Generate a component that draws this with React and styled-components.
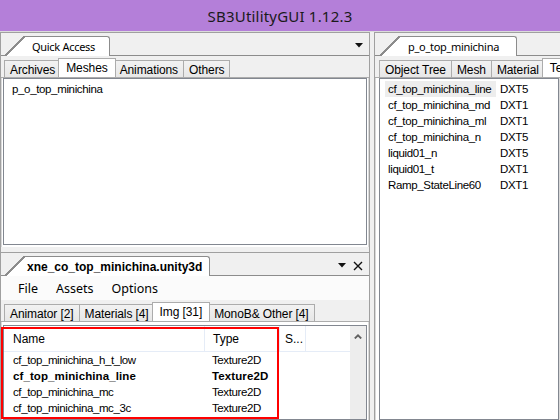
import React from "react";
import styled, { createGlobalStyle } from "styled-components";

const GlobalStyle = createGlobalStyle`
  html, body {
    margin: 0;
    padding: 0;
    background: #f0f0f0;
  }
  body {
    font-family: "Liberation Sans", Arial, sans-serif;
    font-size: 12px;
    color: #000;
    overflow: hidden;
  }
`

const Window = styled.div`
  position: relative;
  width: 560px;
  height: 420px;
  display: flex;
  flex-direction: column;
  overflow: hidden;
  background: #f0f0f0;
`
const TitleBar = styled.div`
  flex: none;
  height: 31px;
  display: flex;
  align-items: center;
  justify-content: center;
  background: #b47fd9;
  font-family: "Noto Sans", "Open Sans", sans-serif;
  font-size: 15px;
  color: #1a1a1a;
  letter-spacing: 0.2px;
`
const Body = styled.div`
  flex: 1;
  min-height: 0;
  display: flex;
  border-top: 1px solid #dcdcdc;
`
const LeftColumn = styled.div`
  width: 368px;
  flex: none;
  display: flex;
  flex-direction: column;
  border-left: 1px solid #a0a0a0;
  border-right: 1px solid #a0a0a0;
`
const Splitter = styled.div`
  width: 4px;
  flex: none;
`
const RightColumn = styled.div`
  flex: 1;
  min-width: 0;
  display: flex;
  flex-direction: column;
  border-left: 1px solid #a0a0a0;
`
const Pane = styled.div`
  display: flex;
  flex-direction: column;
  min-height: 0;
  ${p => p.$height ? `height: ${p.$height}px; flex: none;` : `flex: 1;`}
  border-top: 1px solid #a0a0a0;
`
const PaneGap = styled.div`
  height: 5px;
  flex: none;
`
const DocStrip = styled.div`
  flex: none;
  height: 22px;
  display: flex;
  align-items: flex-end;
  padding-left: ${p => p.$indent || 24}px;
  padding-right: 6px;
  border-bottom: 1px solid #8c8c8c;
`
const DocTab = styled.div`
  position: relative;
  height: 19px;
  margin-bottom: -1px;
  display: flex;
  align-items: center;
  padding: 0 ${p => p.$padRight}px 0 ${p => p.$padLeft}px;
  background: #fff;
  border: 1px solid #8c8c8c;
  border-left: none;
  border-bottom: none;
  border-top-right-radius: 3px;
  font-family: ${p => p.$bold ? `"Liberation Sans", Arial, sans-serif` : `"Noto Sans", "Open Sans", sans-serif`};
  font-weight: ${p => p.$bold ? 700 : 400};
  font-size: ${p => p.$bold ? 12 : 11}px;
  letter-spacing: ${p => p.$bold ? "0px" : "-0.3px"};
  color: #000;
  &::before {
    content: "";
    position: absolute;
    left: -20px;
    top: -1px;
    width: 20px;
    height: 20px;
    background: linear-gradient(to bottom right, transparent 47%, #8c8c8c 47%, #8c8c8c 53%, #fff 53%);
  }
`
const DocActions = styled.div`
  margin-left: auto;
  align-self: center;
  display: flex;
  align-items: center;
  gap: 7px;
  padding-top: 3px;
`
const TabStrip = styled.div`
  flex: none;
  height: 21px;
  display: flex;
  align-items: flex-end;
  padding-left: ${p => p.$indent || 3}px;
  border-bottom: 1px solid #acacac;
  white-space: nowrap;
  overflow: hidden;
`
const Tab = styled.div`
  position: relative;
  flex: none;
  height: ${p => p.$active ? 20 : 18}px;
  margin: 0 ${p => p.$active ? -2 : 0}px -1px;
  padding: 0 ${p => p.$active ? 7 : 5}px;
  display: flex;
  align-items: center;
  box-sizing: border-box;
  border: 1px solid #acacac;
  border-bottom: ${p => p.$active ? "1px solid #fff" : "none"};
  margin-right: ${p => p.$active ? -2 : -1}px;
  background: ${p => p.$active ? "#fff" : "linear-gradient(#f2f2f2, #e6e6e6)"};
  z-index: ${p => p.$active ? 1 : 0};
  font-size: 12px;
  letter-spacing: -0.1px;
`
const TabPage = styled.div`
  flex: 1;
  min-height: 0;
  display: flex;
  padding: ${p => p.$pad || "0 1px 2px"};
  background: #fff;
  border-left: 1px solid #d9d9d9;
  border-right: 1px solid #d9d9d9;
`
const ListBox = styled.div`
  flex: 1;
  background: #fff;
  border: 1px solid #828790;
  padding: ${p => p.$pad || "2px 0 0 8px"};
  overflow: hidden;
`
const ListRow = styled.div`
  height: 16px;
  display: flex;
  align-items: center;
  white-space: nowrap;
  font-size: 11.5px;
  letter-spacing: -0.35px;
`
const NameCell = styled.div`
  width: ${p => p.$width}px;
  flex: none;
  height: 16px;
  line-height: 16px;
  padding: 0 3px;
  box-sizing: border-box;
  background: ${p => p.$selected ? "#ededed" : "transparent"};
`
const TypeCell = styled.div`
  padding-left: ${p => p.$gap}px;
`
const MenuBar = styled.div`
  flex: none;
  height: 24px;
  display: flex;
  align-items: center;
  padding-left: 8px;
  background: #fbfbfb;
  font-family: "Noto Sans", "Open Sans", sans-serif;
  font-size: 12.5px;
`
const MenuItem = styled.div`
  padding: 0 9px;
`
const ListView = styled.div`
  flex: 1;
  min-height: 0;
  display: flex;
  background: #fff;
  border: 1px solid #828790;
  overflow: hidden;
`
const Table = styled.div`
  flex: 1;
  min-width: 0;
`
const HeaderRow = styled.div`
  height: 25px;
  display: flex;
  border-bottom: 1px solid #e5ecf7;
`
const HeaderCell = styled.div`
  width: ${p => p.$width}px;
  flex: none;
  box-sizing: border-box;
  display: flex;
  align-items: center;
  padding-left: ${p => p.$pad || 9}px;
  border-right: 1px solid #e5ecf7;
  white-space: nowrap;
  overflow: hidden;
`
const DataRow = styled.div`
  height: 16px;
  display: flex;
  align-items: center;
  font-size: 11.5px;
  font-weight: ${p => p.$bold ? 700 : 400};
  white-space: nowrap;
  letter-spacing: ${p => p.$bold ? "0.1px" : "-0.4px"};
`
const DataCell = styled.div`
  width: ${p => p.$width}px;
  flex: none;
  padding-left: 9px;
  box-sizing: border-box;
`
const ScrollBar = styled.div`
  width: 16px;
  flex: none;
  background: #ededed;
  display: flex;
  justify-content: center;
  padding-top: 8px;
  box-sizing: border-box;
`
const Highlight = styled.div`
  position: absolute;
  left: 1px;
  top: 327px;
  width: 278px;
  height: 92px;
  box-sizing: border-box;
  border: 2px solid #ff0000;
  pointer-events: none;
`

const DropArrow = () => (
  <svg width="8" height="5" viewBox="0 0 8 5">
    <path d="M0 0H8L4 4.5Z" fill="#111" />
  </svg>
)
const CloseIcon = () => (
  <svg width="10" height="10" viewBox="0 0 10 10">
    <path d="M1 1L9 9M9 1L1 9" stroke="#111" strokeWidth="1.4" />
  </svg>
)
const UpChevron = () => (
  <svg width="8" height="5" viewBox="0 0 8 5">
    <path d="M0.8 4.5L4 1.3L7.2 4.5" stroke="#606060" strokeWidth="1.8" fill="none" />
  </svg>
)

const textures = [
  ["cf_top_minichina_line", "DXT5"],
  ["cf_top_minichina_md", "DXT1"],
  ["cf_top_minichina_ml", "DXT1"],
  ["cf_top_minichina_n", "DXT5"],
  ["liquid01_n", "DXT5"],
  ["liquid01_t", "DXT1"],
  ["Ramp_StateLine60", "DXT1"],
]

const assets = [
  ["cf_top_minichina_h_t_low", "Texture2D"],
  ["cf_top_minichina_line", "Texture2D", true],
  ["cf_top_minichina_mc", "Texture2D"],
  ["cf_top_minichina_mc_3c", "Texture2D"],
]

const App = () => {
  return (
    <Window>
      <GlobalStyle />
      <TitleBar>SB3UtilityGUI 1.12.3</TitleBar>
      <Body>
        <LeftColumn>
          <Pane $height={214}>
            <DocStrip>
              <DocTab $padLeft={7} $padRight={14}>Quick Access</DocTab>
              <DocActions>
                <DropArrow />
              </DocActions>
            </DocStrip>
            <TabStrip>
              <Tab>Archives</Tab>
              <Tab $active>Meshes</Tab>
              <Tab>Animations</Tab>
              <Tab>Others</Tab>
            </TabStrip>
            <TabPage>
              <ListBox>
                <ListRow>p_o_top_minichina</ListRow>
              </ListBox>
            </TabPage>
          </Pane>
          <PaneGap />
          <Pane>
            <DocStrip>
              <DocTab $bold $padLeft={2} $padRight={7}>xne_co_top_minichina.unity3d</DocTab>
              <DocActions>
                <DropArrow />
                <CloseIcon />
              </DocActions>
            </DocStrip>
            <MenuBar>
              <MenuItem>File</MenuItem>
              <MenuItem>Assets</MenuItem>
              <MenuItem>Options</MenuItem>
            </MenuBar>
            <TabStrip>
              <Tab>Animator [2]</Tab>
              <Tab>Materials [4]</Tab>
              <Tab $active>Img [31]</Tab>
              <Tab>MonoB&amp; Other [4]</Tab>
            </TabStrip>
            <TabPage $pad="3px 1px 0">
              <ListView>
                <Table>
                  <HeaderRow>
                    <HeaderCell $width={201}>Name</HeaderCell>
                    <HeaderCell $width={75} $pad={8}>Type</HeaderCell>
                    <HeaderCell $width={26} $pad={5}>S...</HeaderCell>
                  </HeaderRow>
                  {assets.map(([name, type, bold]) => (
                    <DataRow key={name} $bold={bold}>
                      <DataCell $width={199}>{name}</DataCell>
                      <DataCell $width={80}>{type}</DataCell>
                    </DataRow>
                  ))}
                </Table>
                <ScrollBar>
                  <UpChevron />
                </ScrollBar>
              </ListView>
            </TabPage>
          </Pane>
        </LeftColumn>
        <Splitter />
        <RightColumn>
          <Pane>
            <DocStrip $indent={25}>
              <DocTab $padLeft={8} $padRight={17}>p_o_top_minichina</DocTab>
            </DocStrip>
            <TabStrip $indent={4}>
              <Tab>Object Tree</Tab>
              <Tab>Mesh</Tab>
              <Tab>Material</Tab>
              <Tab $active>Texture</Tab>
            </TabStrip>
            <TabPage $pad="0 0 0 3px">
              <ListBox $pad="2px 0 0 5px">
                {textures.map(([name, type], i) => (
                  <ListRow key={name}>
                    <NameCell $width={111} $selected={i === 0}>{name}</NameCell>
                    <TypeCell $gap={4}>{type}</TypeCell>
                  </ListRow>
                ))}
              </ListBox>
            </TabPage>
          </Pane>
        </RightColumn>
      </Body>
      <Highlight />
    </Window>
  )
}

export default App
